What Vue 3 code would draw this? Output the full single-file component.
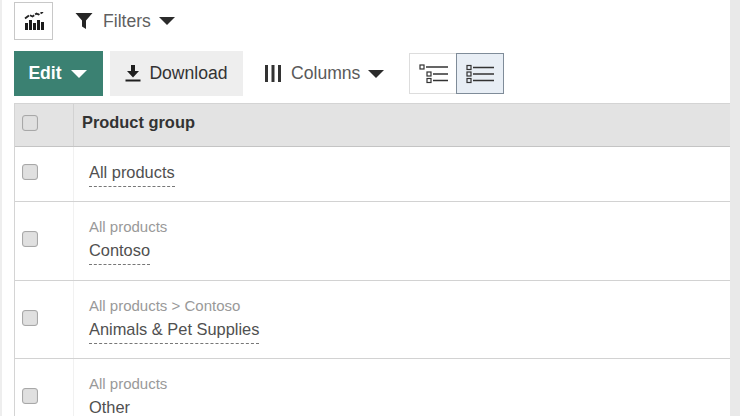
<script setup>
const rows = [
  { path: '', name: 'All products', h: 54 },
  { path: 'All products', name: 'Contoso', h: 78 },
  { path: 'All products > Contoso', name: 'Animals & Pet Supplies', h: 77 },
  { path: 'All products', name: 'Other', h: 78 },
]
</script>

<template>
  <div class="page">
    <div class="top">
      <button class="chart">
        <svg width="20" height="18" viewBox="0 0 20 18">
          <path d="M1 6.500l4.500-3.500 3 1.500 4-3 2 1 4.500-2.500" fill="none" stroke="#222" stroke-width="1.800" stroke-dasharray="5 1.200"/>
          <rect x="1" y="11" width="3" height="7" fill="#1c1c1c"/>
          <rect x="5" y="8" width="3" height="10" fill="#1c1c1c"/>
          <rect x="9" y="11" width="3" height="7" fill="#1c1c1c"/>
          <rect x="13" y="8" width="3" height="10" fill="#1c1c1c"/>
          <rect x="17" y="10" width="3" height="8" fill="#1c1c1c"/>
        </svg>
      </button>
      <div class="filters">
        <svg class="funnel" width="18" height="18" viewBox="0 0 18 18"><path d="M0.500 1h17l-6.500 7.500V17l-4-2.500v-6z" fill="#262626"/></svg>
        <span>Filters</span>
        <i class="caret dark"></i>
      </div>
    </div>
    <div class="actions">
      <button class="edit">Edit <i class="caret white"></i></button>
      <button class="download">
        <svg width="16" height="17" viewBox="0 0 16 17"><path d="M6 0h4v6h4l-6 6.500L2 6h4z M0.500 14.500h15v2h-15z" fill="#1f1f1f"/></svg>
        <span>Download</span>
      </button>
      <div class="columns">
        <svg width="16" height="17" viewBox="0 0 16 17"><path d="M0 0h3v17H0zM6.500 0h3v17h-3zM13 0h3v17h-3z" fill="#333"/></svg>
        <span>Columns</span>
        <i class="caret dark"></i>
      </div>
      <div class="toggle">
        <button class="view">
          <svg width="29" height="20" viewBox="0 0 29 20">
            <g fill="none" stroke="#333" stroke-width="1.200">
              <rect x="1" y="1" width="4" height="4"/><rect x="8" y="8" width="4" height="4"/><rect x="8" y="14.500" width="4" height="4"/>
            </g>
            <path d="M7 3h22M14 10h15M14 16.500h15" stroke="#333" stroke-width="1.300"/>
          </svg>
        </button>
        <button class="view active">
          <svg width="29" height="20" viewBox="0 0 29 20">
            <g fill="none" stroke="#333" stroke-width="1.200">
              <rect x="1" y="1.500" width="4" height="4"/><rect x="1" y="8" width="4" height="4"/><rect x="1" y="14.500" width="4" height="4"/>
            </g>
            <path d="M7 3.500h21M7 10h21M7 16.500h21" stroke="#333" stroke-width="1.300"/>
          </svg>
        </button>
      </div>
    </div>
    <div class="table">
      <div class="row head">
        <div class="check-cell"><span class="check"></span></div>
        <div class="label-cell"><strong>Product group</strong></div>
      </div>
      <div v-for="r in rows" :key="r.name" class="row" :style="{ height: r.h + 'px' }">
        <div class="check-cell"><span class="check"></span></div>
        <div class="label-cell body">
          <div v-if="r.path" class="path">{{ r.path }}</div>
          <div><span class="name">{{ r.name }}</span></div>
        </div>
      </div>
    </div>
  </div>
</template>

<style>
html, body { margin: 0; background: #fff; overflow: hidden; }
</style>

<style scoped>
.page {
  width: 740px; height: 416px; box-sizing: border-box; overflow: hidden;
  padding: 2px 0 0 12px;
  font-family: "Liberation Sans", Arial, sans-serif; font-size: 16.4px; color: #444;
  background: #fff;
  border-left: 2px solid #eeeeee;
  border-right: 10px solid #e9e9e9;
}
button { font: inherit; cursor: pointer; margin: 0; }
.top { display: flex; align-items: center; height: 37px; }
.chart {
  width: 39px; height: 38px; box-sizing: border-box; border: 1px solid #c8c8c8; background: #fff;
  display: flex; align-items: center; justify-content: center; padding: 0;
}
.filters { display: flex; align-items: center; margin-left: 22px; margin-top: 1px; color: #5f5f5f; font-size: 17.6px; }
.filters span { margin-left: 10px; margin-right: 8px; }
.caret { display: inline-block; width: 0; height: 0; border-left: 8.500px solid transparent; border-right: 8.500px solid transparent; }
.caret.dark { border-top: 8px solid #2b2b2b; }
.caret.white { border-top: 8px solid #fff; }
.actions { display: flex; align-items: center; margin-top: 12px; height: 45px; font-size: 17.6px; }
.edit {
  width: 89px; height: 45px; border: 0; background: #3b8172; color: #fff; font-weight: 700; padding: 0 2px 0 0;
  display: flex; align-items: center; justify-content: center; gap: 9px;
}
.download {
  width: 133px; height: 45px; margin-left: 7px; border: 0; background: #eeeeee; color: #333; padding: 0;
  display: flex; align-items: center; justify-content: center; gap: 8px;
}
.columns { display: flex; align-items: center; margin-left: 22px; color: #5a5a5a; }
.columns span { margin-left: 10px; margin-right: 8px; }
.toggle { display: flex; margin-left: 25px; height: 41px; }
.view { width: 48px; height: 41px; box-sizing: border-box; border: 1px solid #ddd; background: #fff; padding: 0; display: flex; align-items: center; justify-content: center; }
.view.active { background: #e8eef5; border-color: #7f8c99; margin-left: -1px; }
.table { margin-top: 7px; border-left: 1px solid #d4d4d4; border-top: 1px solid #d4d4d4; }
.row { display: flex; border-bottom: 1px solid #d2d2d2; }
.head { height: 42px; background: #e3e3e3; border-bottom: 1px solid #c4c4c4; }
.check-cell { width: 59px; display: flex; align-items: center; box-sizing: border-box; padding: 0 0 4px 7px; border-right: 1px solid #f1f1f1; flex: none; }
.head .check-cell { border-right-color: #d2d2d2; }
.check { width: 16px; height: 16px; box-sizing: border-box; border: 1px solid #a8a8a8; border-radius: 3px; background: #e0e0e0; box-shadow: inset 0 0 1px #bbb; }
.label-cell { display: flex; align-items: center; padding: 0 0 6px 8px; }
.label-cell strong { color: #333; font-size: 16.400px; }
.label-cell.body { flex-direction: column; align-items: flex-start; justify-content: center; padding: 0 0 0 15px; }
.path { font-size: 15px; color: #999; line-height: 20px; margin-bottom: 2px; }
.name { display: inline-block; line-height: 22px; color: #505050; border-bottom: 1px dashed #777; padding-bottom: 3px; }
</style>
